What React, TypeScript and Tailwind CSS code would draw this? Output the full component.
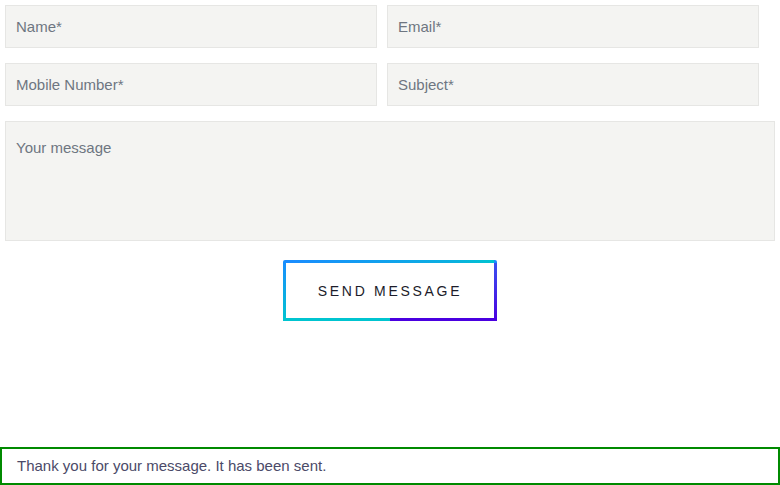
import React from "react";

const font = { fontFamily: '"Liberation Sans", Arial, sans-serif' };

function Field({ label }: { label: string }) {
  return (
    <div className="w-[372px] h-[43px] bg-[#f4f4f2] border border-[#e6e6e4] flex items-center pl-[10px] pt-[2px] text-[15px] text-[#6e7681]">
      {label}
    </div>
  );
}

export default function App() {
  return (
    <div className="w-[780px] h-[485px] bg-white relative" style={font}>
      <div className="pt-[5px] pl-[5px] flex flex-col">
        <div className="flex gap-[10px]">
          <Field label="Name*" />
          <Field label="Email*" />
        </div>
        <div className="flex gap-[10px] mt-[15px]">
          <Field label="Mobile Number*" />
          <Field label="Subject*" />
        </div>
        <div className="mt-[15px] w-[770px] h-[120px] bg-[#f4f4f2] border border-[#e6e6e4] pl-[10px] pt-[16px] text-[15px] text-[#6e7681] leading-[20px]">
          Your message
        </div>
        <div className="mt-[19px] w-[770px] flex justify-center">
          <div className="relative w-[214px] h-[61px] rounded-[2px] bg-[linear-gradient(180deg,#1a8cff,#00c4d0)] p-[3px]">
            <div className="absolute left-[3px] right-[3px] top-0 h-[3px] bg-[linear-gradient(90deg,#1a8cff,#0ab0e0_80%,#00c4d0)]" />
            <div className="absolute right-0 top-[3px] bottom-0 w-[3px] bg-[linear-gradient(180deg,#3a50f0,#4a00e0)]" />
            <div className="absolute left-[107px] right-0 bottom-0 h-[3px] bg-[#4a00e0]" />
            <div className="absolute left-0 w-[107px] bottom-0 h-[3px] bg-[#00c4d0]" />
            <div className="relative w-full h-full bg-white flex items-center justify-center text-[14px] tracking-[2.7px] text-[#1c1c2a] pt-[2px]">
              SEND MESSAGE
            </div>
          </div>
        </div>
      </div>
      <div className="absolute left-0 top-[447px] w-[780px] h-[38px] border-2 border-[#008a00] flex items-center pl-[15px] text-[15px] text-[#4b4a68]">
        Thank you for your message. It has been sent.
      </div>
    </div>
  );
}
